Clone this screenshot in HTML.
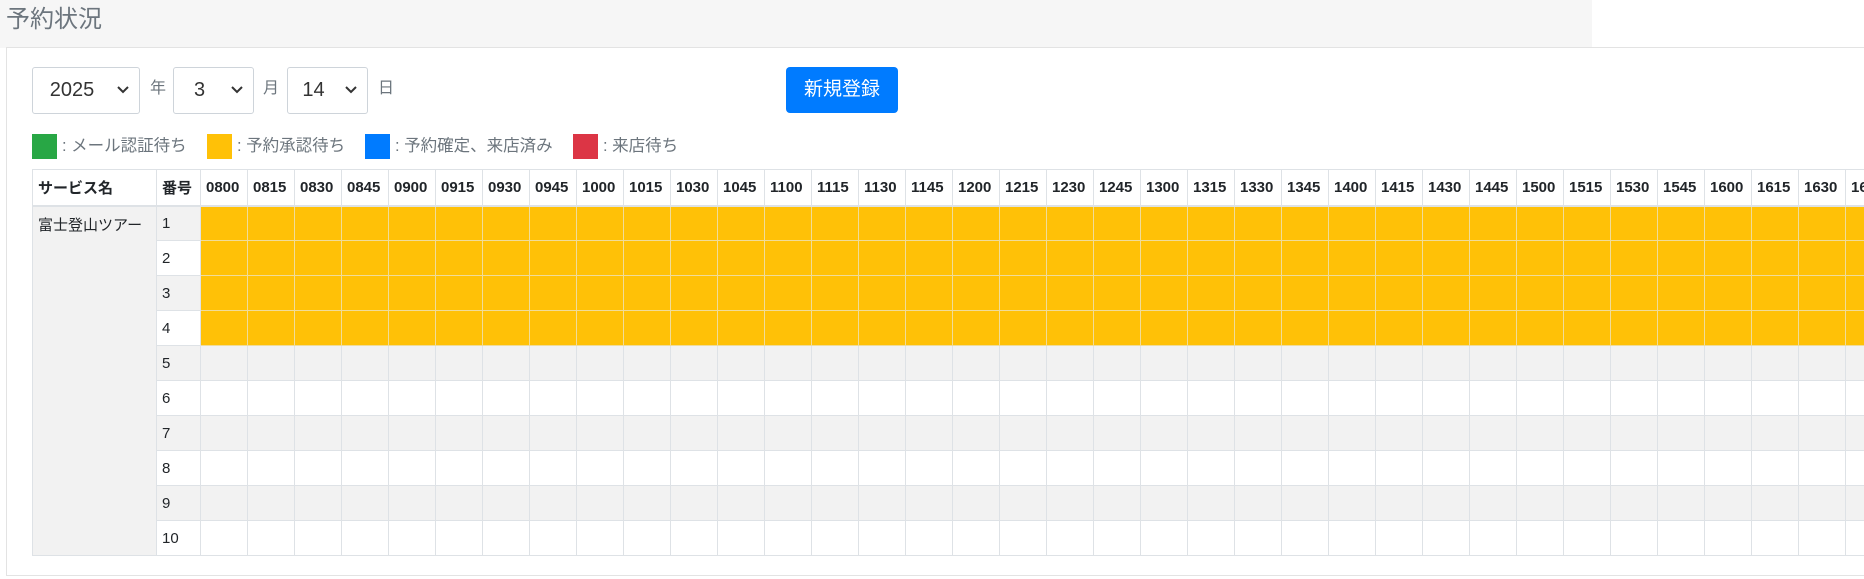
<!DOCTYPE html>
<html><head><meta charset="utf-8"><style>
*{box-sizing:border-box;margin:0;padding:0}
html,body{width:1864px;height:579px;overflow:hidden}
body{background:#fff;font-family:"Liberation Sans","Noto Sans CJK JP",sans-serif;position:relative;color:#212529}
.top{position:absolute;left:0;top:0;width:1592px;height:48px;background:#f6f6f6}
.title{position:absolute;left:6px;top:5px;font-size:24px;color:#6c757d;line-height:30px}
.card{position:absolute;left:6px;top:47px;width:1858px;height:529px;border:1px solid #e3e3e3;border-right:none;background:#fff}
.sel{position:absolute;top:67px;height:47px;border:1px solid #ced4da;border-radius:3px;background:#fff;font-size:20px;line-height:45px;color:#333}
.sel span{position:absolute;left:0;right:28px;text-align:center}
.sel svg{position:absolute;right:10px;top:18px}
.lbl{position:absolute;top:74px;font-size:16px;color:#6c757d}
.btn{position:absolute;left:786px;top:67px;width:112px;height:46px;background:#007bff;border-radius:4px;color:#fff;font-size:19px;line-height:46px;text-align:center}
.sq{position:absolute;top:134px;width:25px;height:25px}
.lt{position:absolute;top:135px;font-size:16.5px;color:#6c757d;line-height:22px}
.wrap{position:absolute;left:32px;top:169px;width:1832px;overflow:hidden;height:400px}
table{border-collapse:collapse;table-layout:fixed;width:2200px}
td,th{border:1px solid #dee2e6;height:35px;padding:0 5px;font-size:15px;text-align:left;white-space:nowrap;overflow:hidden}
th{font-size:15px;font-weight:bold;border-bottom:2px solid #dee2e6;height:36px}
td.y{background:#ffc107;border-color:#f0dc9a}
tr.o td{background:#f2f2f2}
tr.o td.y{background:#ffc107}
td.s{background:#f2f2f2;vertical-align:top;padding-top:7px}
</style></head><body>
<div class="top"></div>
<div class="title">予約状況</div>
<div class="card"></div>
<div class="sel" style="left:32px;width:108px"><span>2025</span><svg width="12" height="8" viewBox="0 0 12 8"><path d="M1 1l5 5 5-5" stroke="#333" stroke-width="2" fill="none"/></svg></div>
<div class="lbl" style="left:150px">年</div>
<div class="sel" style="left:173px;width:81px"><span>3</span><svg width="12" height="8" viewBox="0 0 12 8"><path d="M1 1l5 5 5-5" stroke="#333" stroke-width="2" fill="none"/></svg></div>
<div class="lbl" style="left:263px">月</div>
<div class="sel" style="left:287px;width:81px"><span>14</span><svg width="12" height="8" viewBox="0 0 12 8"><path d="M1 1l5 5 5-5" stroke="#333" stroke-width="2" fill="none"/></svg></div>
<div class="lbl" style="left:378px">日</div>
<div class="btn">新規登録</div>
<div class="sq" style="left:32px;background:#28a745"></div><div class="lt" style="left:62px">: メール認証待ち</div>
<div class="sq" style="left:207px;background:#ffc107"></div><div class="lt" style="left:237px">: 予約承認待ち</div>
<div class="sq" style="left:365px;background:#007bff"></div><div class="lt" style="left:395px">: 予約確定、来店済み</div>
<div class="sq" style="left:573px;background:#dc3545"></div><div class="lt" style="left:603px">: 来店待ち</div>
<div class="wrap"><table id="t"></table></div>
<script>
var t=document.getElementById('t'),h='<colgroup><col style="width:124px"><col style="width:44px">';
var times=[];for(var m=480;m<=1200;m+=15){var hh=Math.floor(m/60),mm=m%60;times.push((hh<10?'0':'')+hh+(mm<10?'0':'')+mm);}
for(var i=0;i<times.length;i++)h+='<col style="width:47px">';
h+='</colgroup><tr><th>サービス名</th><th>番号</th>';
times.forEach(function(x){h+='<th>'+x+'</th>'});h+='</tr>';
for(var r=1;r<=10;r++){h+='<tr'+(r%2?' class="o"':'')+'>';if(r==1)h+='<td class="s" rowspan="10">富士登山ツアー</td>';h+='<td>'+r+'</td>';
times.forEach(function(){h+='<td'+(r<=4?' class="y"':'')+'></td>'});h+='</tr>';}
t.innerHTML=h;
</script>
</body></html>
